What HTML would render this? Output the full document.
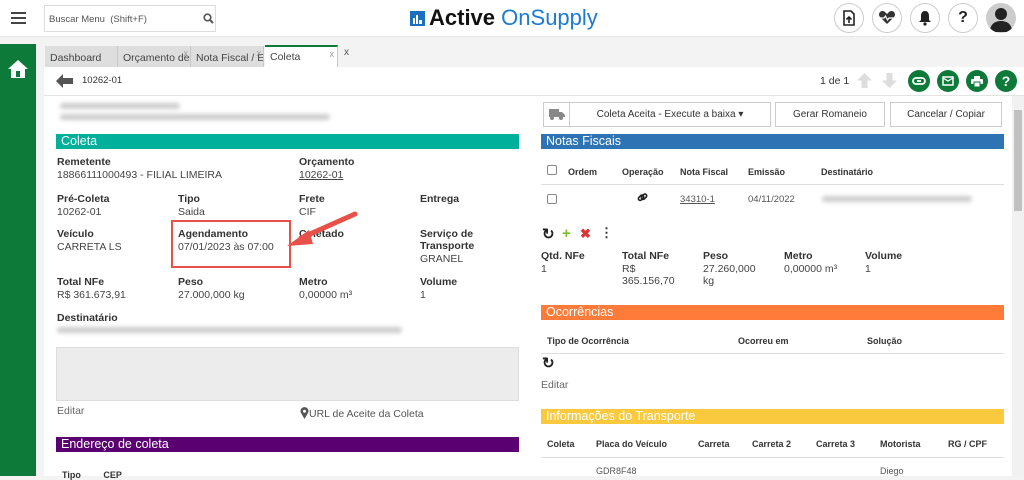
<!DOCTYPE html>
<html><head><meta charset="utf-8"><style>
*{box-sizing:border-box;margin:0;padding:0}
body{width:1024px;height:476px;overflow:hidden;background:#f3f3f3;font-family:"Liberation Sans",sans-serif;font-size:10.5px;color:#333;position:relative}
.a{position:absolute}
.top{left:0;top:0;width:1024px;height:37px;background:#fff;border-bottom:1px solid #e5e5e5}
.circ{width:30px;height:30px;border-radius:50%;border:1px solid #ccc;background:#fff;top:3px;display:flex;align-items:center;justify-content:center}
.tab{top:46px;height:21px;background:#dedede;border-right:1px solid #c8c8c8;padding:6px 5px;font-size:10.5px;color:#444;white-space:nowrap;overflow:hidden}
.g{width:22px;height:22px;border-radius:50%;background:#0e7a3a;top:70px;display:flex;align-items:center;justify-content:center}
.h{height:15px;color:#fff;font-size:12.5px;padding:0 5px;line-height:15px}
.l{font-weight:bold;color:#333}
.v{color:#444}
.th{font-weight:bold;font-size:9px;color:#333}
.blur{background:#ccc;filter:blur(2px);height:6px;border-radius:3px}
.btn{top:102px;height:25px;border:1px solid #ccc;background:#fff;font-size:10px;display:flex;align-items:center;justify-content:center;color:#333}
</style></head><body>
<div class="a top"></div>
<div class="a" style="left:11px;top:12px;width:15px">
<div style="height:2px;background:#444;margin-bottom:3px"></div><div style="height:2px;background:#444;margin-bottom:3px"></div><div style="height:2px;background:#444"></div></div>
<div class="a" style="left:44px;top:5px;width:172px;height:27px;border:1px solid #ddd;background:#fff;font-size:9.5px;color:#555;padding:8px 4px">Buscar Menu &nbsp;(Shift+F)
<svg class="a" style="left:158px;top:7px" width="11" height="11" viewBox="0 0 11 11"><circle cx="4.5" cy="4.5" r="3.3" fill="none" stroke="#555" stroke-width="1.6"/><path d="M7 7l3 3" stroke="#555" stroke-width="2"/></svg></div>
<div class="a" style="left:410px;top:5px;font-size:22px;white-space:nowrap"><span style="display:inline-block;width:15px;height:15px;background:#1c6fbd;vertical-align:-1px;margin-right:4px;position:relative"><span class="a" style="left:3px;top:7px;width:2px;height:6px;background:#fff"></span><span class="a" style="left:6px;top:4px;width:2px;height:9px;background:#fff"></span><span class="a" style="left:9px;top:9px;width:3px;height:4px;background:#fff"></span></span><b style="color:#111">Active</b> <span style="color:#1c7bd0">OnSupply</span></div>
<div class="a circ" style="left:834px"><svg width="14" height="16" viewBox="0 0 14 16"><path d="M2 1h7l3 3v11H2z" fill="none" stroke="#222" stroke-width="1.6"/><path d="M7 13V7M4.5 9.5L7 7l2.5 2.5" stroke="#222" stroke-width="1.6" fill="none"/></svg></div>
<div class="a circ" style="left:872px"><svg width="18" height="14" viewBox="0 0 18 14"><path d="M9 13L2 6a3.5 3.5 0 015-5l2 2 2-2a3.5 3.5 0 015 5z" fill="#333"/><path d="M2 7h4l1.5-2 2 4 1.5-2h5" stroke="#fff" stroke-width="1.2" fill="none"/></svg></div>
<div class="a circ" style="left:910px"><svg width="14" height="16" viewBox="0 0 14 16"><path d="M7 1c3 0 4 2.5 4 5v4l2 2H1l2-2V6c0-2.5 1-5 4-5z" fill="#222"/><circle cx="7" cy="14" r="1.6" fill="#222"/></svg></div>
<div class="a circ" style="left:948px;font-weight:bold;font-size:16px;color:#222">?</div>
<div class="a circ" style="left:986px;background:#ccc;border:none;overflow:hidden"><svg width="30" height="30" viewBox="0 0 30 30"><circle cx="15" cy="11" r="6" fill="#222"/><path d="M4 29c0-8 5-11 11-11s11 3 11 11z" fill="#222"/></svg></div>
<div class="a" style="left:0;top:44px;width:36px;height:432px;background:#0e7a3a"></div>
<svg class="a" style="left:7px;top:59px" width="22" height="20" viewBox="0 0 22 20"><path d="M11 1L1 10h3v9h14v-9h3z" fill="#fff"/><rect x="9" y="12" width="4" height="6" fill="#0e7a3a"/></svg>
<div class="a tab" style="left:45px;width:73px">Dashboard</div>
<div class="a tab" style="left:118px;width:73px">Orçamento de <span class="a" style="right:2px;top:2px;color:#999;font-size:9px">x</span></div>
<div class="a tab" style="left:191px;width:73px">Nota Fiscal / E<span class="a" style="right:2px;top:2px;color:#999;font-size:9px">x</span></div>
<div class="a tab" style="left:265px;width:73px;top:45px;height:22px;background:#fff;border-top:2px solid #0e7a3a;padding-top:4px">Coleta<span class="a" style="right:3px;top:2px;color:#999;font-size:9px">x</span></div>
<div class="a" style="left:344px;top:47px;font-size:10px;color:#555">x</div>
<div class="a" style="left:44px;top:67px;width:980px;height:409px;background:#fff"></div>
<div class="a" style="left:44px;top:95px;width:980px;height:1px;background:#e3e3e3"></div>
<svg class="a" style="left:56px;top:74px" width="17" height="14" viewBox="0 0 17 14"><path d="M0 7L7 0v4h10v6H7v4z" fill="#555"/></svg>
<div class="a" style="left:82px;top:75px;font-size:9.5px">10262-01</div>
<div class="a" style="left:820px;top:75px;font-size:10.5px">1 de 1</div>
<svg class="a" style="left:857px;top:73px" width="15" height="15" viewBox="0 0 15 15"><path d="M7.5 0L15 7.5h-4.5V15h-6V7.5H0z" fill="#ddd"/></svg>
<svg class="a" style="left:882px;top:73px" width="15" height="15" viewBox="0 0 15 15"><path d="M7.5 15L15 7.5h-4.5V0h-6v7.5H0z" fill="#ddd"/></svg>
<div class="a g" style="left:908px"><svg width="14" height="8" viewBox="0 0 14 8"><rect x="1" y="1" width="12" height="6" rx="3" fill="none" stroke="#fff" stroke-width="1.8"/><path d="M5 4h4" stroke="#fff" stroke-width="1.8"/></svg></div>
<div class="a g" style="left:937px"><svg width="12" height="10" viewBox="0 0 12 10"><rect x="1" y="1" width="10" height="8" fill="none" stroke="#fff" stroke-width="1.5"/><path d="M1 2l5 3 5-3" stroke="#fff" stroke-width="1.3" fill="none"/></svg></div>
<div class="a g" style="left:966px"><svg width="12" height="11" viewBox="0 0 12 11"><rect x="3" y="0" width="6" height="3" fill="#fff"/><rect x="0" y="3" width="12" height="5" rx="1" fill="#fff"/><rect x="3" y="6" width="6" height="5" fill="#fff" stroke="#0e7a3a"/></svg></div>
<div class="a g" style="left:995px;color:#fff;font-weight:bold;font-size:14px">?</div>
<!-- left -->
<div class="a blur" style="left:60px;top:103px;width:120px"></div>
<div class="a blur" style="left:60px;top:114px;width:270px"></div>
<div class="a h" style="left:56px;top:134px;width:463px;background:#00b09a">Coleta</div>
<div class="a l" style="left:57px;top:156px">Remetente</div><div class="a v" style="left:57px;top:169px">18866111000493 - FILIAL LIMEIRA</div>
<div class="a l" style="left:299px;top:156px">Orçamento</div><div class="a v" style="left:299px;top:169px;text-decoration:underline">10262-01</div>
<div class="a l" style="left:57px;top:193px">Pré-Coleta</div><div class="a v" style="left:57px;top:206px">10262-01</div>
<div class="a l" style="left:178px;top:193px">Tipo</div><div class="a v" style="left:178px;top:206px">Saida</div>
<div class="a l" style="left:299px;top:193px">Frete</div><div class="a v" style="left:299px;top:206px">CIF</div>
<div class="a l" style="left:420px;top:193px">Entrega</div>
<div class="a l" style="left:57px;top:228px">Veículo</div><div class="a v" style="left:57px;top:241px">CARRETA LS</div>
<div class="a l" style="left:178px;top:228px">Agendamento</div><div class="a v" style="left:178px;top:241px">07/01/2023 às 07:00</div>
<div class="a l" style="left:299px;top:228px">Coletado</div>
<div class="a l" style="left:420px;top:228px;line-height:12px">Serviço de<br>Transporte</div><div class="a v" style="left:420px;top:253px">GRANEL</div>
<div class="a" style="left:171px;top:220px;width:120px;height:48px;border:2px solid #e8504a"></div>
<svg class="a" style="left:285px;top:210px" width="75" height="40" viewBox="0 0 75 40"><path d="M70 4L16 28" stroke="#e8504a" stroke-width="5" stroke-linecap="round"/><path d="M2 36L24 20L28 34z" fill="#e8504a"/></svg>
<div class="a l" style="left:57px;top:276px">Total NFe</div><div class="a v" style="left:57px;top:289px">R$ 361.673,91</div>
<div class="a l" style="left:178px;top:276px">Peso</div><div class="a v" style="left:178px;top:289px">27.000,000 kg</div>
<div class="a l" style="left:299px;top:276px">Metro</div><div class="a v" style="left:299px;top:289px">0,00000 m³</div>
<div class="a l" style="left:420px;top:276px">Volume</div><div class="a v" style="left:420px;top:289px">1</div>
<div class="a l" style="left:57px;top:312px">Destinatário</div>
<div class="a blur" style="left:57px;top:327px;width:345px"></div>
<div class="a" style="left:56px;top:347px;width:463px;height:54px;background:#ececec;border:1px solid #ddd"></div>
<div class="a v" style="left:57px;top:405px;color:#666">Editar</div>
<div class="a v" style="left:300px;top:407px;color:#555"><svg width="9" height="12" viewBox="0 0 9 12" style="vertical-align:-2px"><path d="M4.5 12L1 6a4 4 0 117 0z" fill="#555"/><circle cx="4.5" cy="4.3" r="1.5" fill="#fff"/></svg>URL de Aceite da Coleta</div>
<div class="a h" style="left:56px;top:437px;width:463px;background:#5a0070">Endereço de coleta</div>
<div class="a th" style="left:62px;top:470px">Tipo &nbsp;&nbsp;&nbsp;&nbsp;&nbsp;&nbsp;&nbsp;&nbsp;CEP</div>
<!-- right -->
<div class="a btn" style="left:543px;top:102px;width:228px;justify-content:flex-start"><span style="width:26px;height:23px;border-right:1px solid #ccc;display:flex;align-items:center;justify-content:center"><svg width="16" height="11" viewBox="0 0 16 11"><rect x="0" y="0" width="10" height="8" fill="#888"/><path d="M10 3h3l3 3v2h-6z" fill="#888"/><circle cx="3" cy="9" r="2" fill="#888"/><circle cx="12" cy="9" r="2" fill="#888"/></svg></span><span style="flex:1;text-align:center">Coleta Aceita - Execute a baixa ▾</span></div>
<div class="a btn" style="left:775px;width:110px">Gerar Romaneio</div>
<div class="a btn" style="left:890px;width:112px">Cancelar / Copiar</div>
<div class="a h" style="left:541px;top:134px;width:463px;background:#2e74b5">Notas Fiscais</div>
<div class="a" style="left:547px;top:165px;width:10px;height:10px;border:1px solid #888;border-radius:2px"></div>
<div class="a th" style="left:568px;top:167px">Ordem</div><div class="a th" style="left:622px;top:167px">Operação</div><div class="a th" style="left:680px;top:167px">Nota Fiscal</div><div class="a th" style="left:748px;top:167px">Emissão</div><div class="a th" style="left:821px;top:167px">Destinatário</div>
<div class="a" style="left:541px;top:184px;width:463px;height:1px;background:#ddd"></div>
<div class="a" style="left:547px;top:194px;width:10px;height:10px;border:1px solid #888;border-radius:2px"></div>
<svg class="a" style="left:637px;top:192px" width="11" height="11" viewBox="0 0 11 11"><rect x="1" y="4" width="6" height="3.5" rx="1.7" transform="rotate(-45 4 5.7)" fill="none" stroke="#222" stroke-width="1.6"/><rect x="4" y="3" width="6" height="3.5" rx="1.7" transform="rotate(-45 7 4.7)" fill="none" stroke="#222" stroke-width="1.6"/></svg>
<div class="a" style="left:680px;top:194px;font-size:9.5px;text-decoration:underline;color:#555">34310-1</div>
<div class="a" style="left:748px;top:194px;font-size:9.5px;color:#555">04/11/2022</div>
<div class="a blur" style="left:822px;top:196px;width:150px"></div>
<div class="a" style="left:542px;top:225px;font-size:15px;font-weight:bold;color:#222">↻</div>
<div class="a" style="left:562px;top:225px;font-size:15px;font-weight:bold;color:#7cbf2a">+</div>
<div class="a" style="left:580px;top:226px;font-size:13px;font-weight:bold;color:#d33">✖</div>
<div class="a" style="left:600px;top:225px;font-size:13px;font-weight:bold">⋮</div>
<div class="a l" style="left:541px;top:250px">Qtd. NFe</div><div class="a v" style="left:541px;top:263px">1</div>
<div class="a l" style="left:622px;top:250px">Total NFe</div><div class="a v" style="left:622px;top:263px;line-height:12px">R$<br>365.156,70</div>
<div class="a l" style="left:703px;top:250px">Peso</div><div class="a v" style="left:703px;top:263px;line-height:12px">27.260,000<br>kg</div>
<div class="a l" style="left:784px;top:250px">Metro</div><div class="a v" style="left:784px;top:263px">0,00000 m³</div>
<div class="a l" style="left:865px;top:250px">Volume</div><div class="a v" style="left:865px;top:263px">1</div>
<div class="a h" style="left:541px;top:305px;width:463px;background:#ff7b39">Ocorrências</div>
<div class="a th" style="left:547px;top:336px">Tipo de Ocorrência</div><div class="a th" style="left:738px;top:336px">Ocorreu em</div><div class="a th" style="left:867px;top:336px">Solução</div>
<div class="a" style="left:541px;top:353px;width:463px;height:1px;background:#ddd"></div>
<div class="a" style="left:542px;top:354px;font-size:15px;font-weight:bold;color:#222">↻</div>
<div class="a v" style="left:541px;top:379px;color:#666">Editar</div>
<div class="a h" style="left:541px;top:409px;width:463px;background:#fbc93d">Informações do Transporte</div>
<div class="a th" style="left:547px;top:439px">Coleta</div><div class="a th" style="left:596px;top:439px">Placa do Veículo</div><div class="a th" style="left:698px;top:439px">Carreta</div><div class="a th" style="left:752px;top:439px">Carreta 2</div><div class="a th" style="left:816px;top:439px">Carreta 3</div><div class="a th" style="left:880px;top:439px">Motorista</div><div class="a th" style="left:948px;top:439px">RG / CPF</div>
<div class="a" style="left:541px;top:457px;width:463px;height:1px;background:#ddd"></div>
<div class="a" style="left:596px;top:466px;font-size:9px;color:#555">GDR8F48</div><div class="a" style="left:880px;top:466px;font-size:9px;color:#555">Diego</div>
<div class="a" style="left:1012px;top:96px;width:12px;height:380px;background:#f1f1f1"></div>
<div class="a" style="left:1014px;top:110px;width:8px;height:101px;background:#c1c1c1"></div>
</body></html>
